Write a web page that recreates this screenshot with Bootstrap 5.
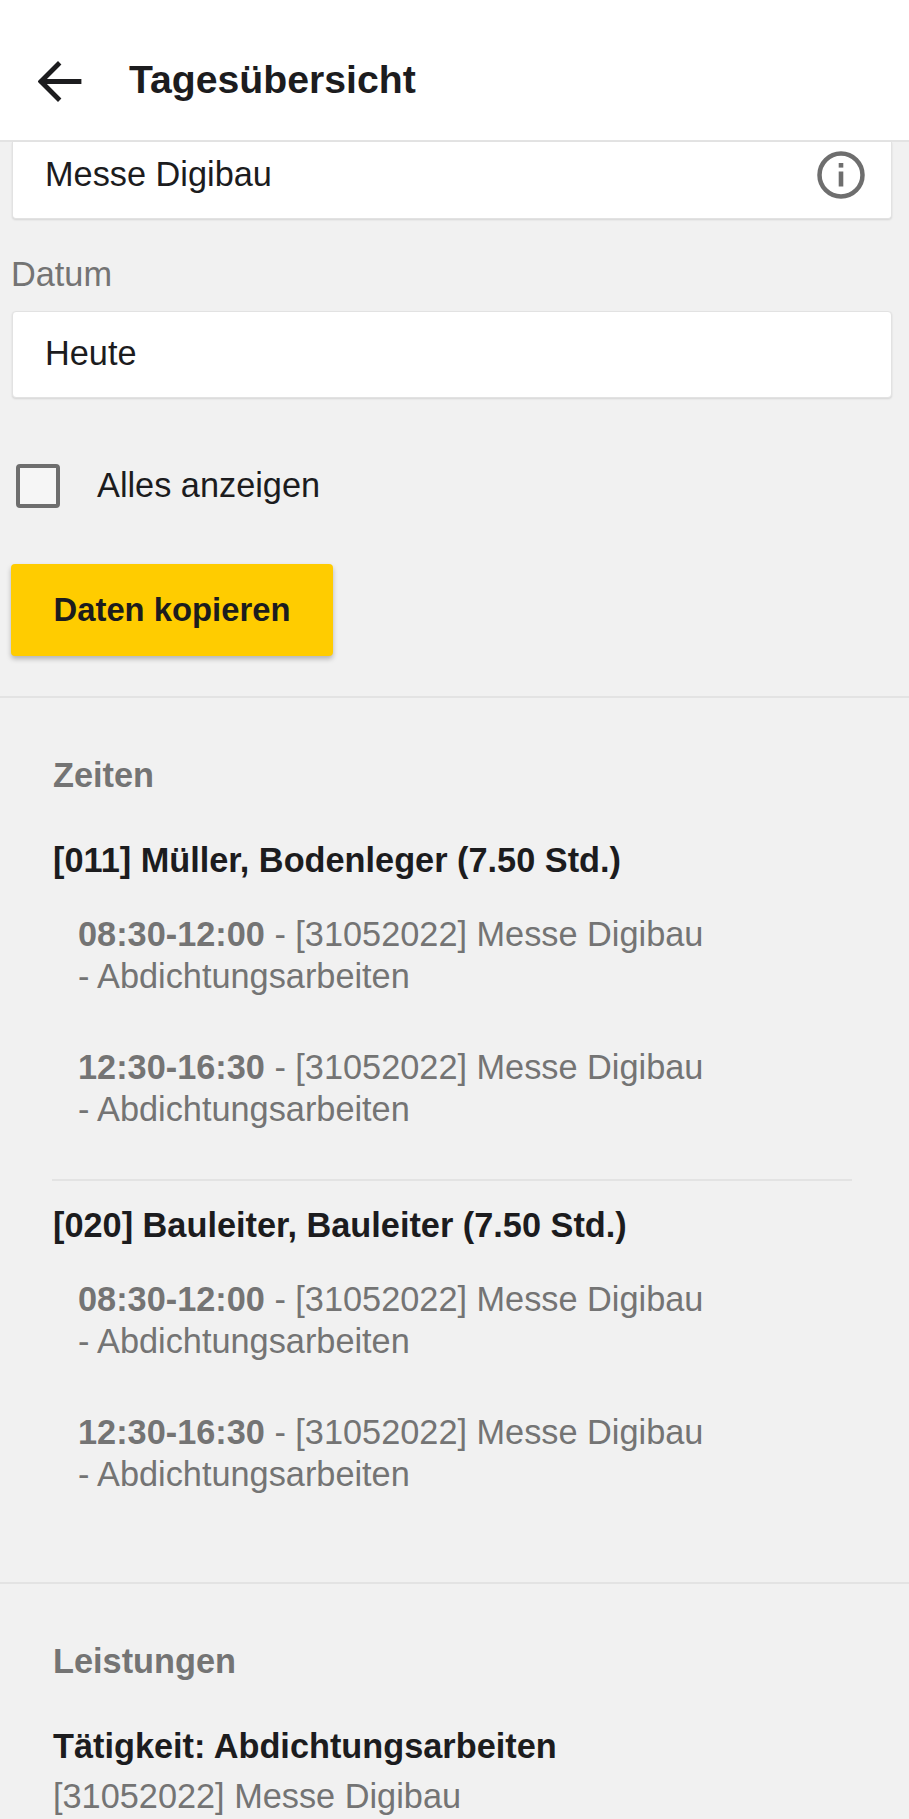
<!DOCTYPE html>
<html lang="de">
<head>
<meta charset="utf-8">
<title>Tagesübersicht</title>
<link rel="stylesheet" href="https://cdn.jsdelivr.net/npm/bootstrap@5.3.0/dist/css/bootstrap.min.css">
<style>
html, body { height: 1819px; overflow: hidden; }
body { background: #f1f1f1; font-family: "Liberation Sans", Arial, sans-serif; color: #1c1c1e; font-size: 34.3px; }
.app-head { height: 142px; background: #fff; border-bottom: 2px solid #e3e3e3; padding: 20px 0 0 38px; gap: 47px; }
.app-title { font-size: 39.2px; font-weight: 700; margin: 0; line-height: 1; }
.app-form { padding: 0 17px 0 12px; }
.field-box { background: #fff; border: 1px solid #e2e2e2; border-radius: 4px; box-shadow: 0 1px 2px rgba(0,0,0,.12); padding: 0 26px 2px 32px; font-size: 34.3px; height: 87px; }
.field-top { height: 77px; border-top: 0; border-radius: 0 0 4px 4px; padding-bottom: 11px; }
.field-label { color: #747474; font-size: 34.3px; line-height: 38px; margin: 36px 0 18px -1px; }
.check-row { margin: 66px 0 0 4px; height: 44px; gap: 37px; }
.check-box { width: 44px; height: 44px; border: 4px solid #6e6e6e; border-radius: 4px; background: #f6f6f6; appearance: none; margin: 0; flex: none; }
.copy-btn { background: #ffcc00; color: #1c1c1e; font-weight: 700; font-size: 32.8px; border: 0; border-radius: 4px; width: 322px; height: 92px; padding: 0; margin: 56px 0 0 -1px; box-shadow: 0 3px 5px rgba(0,0,0,.25); }
.sect-rule { border-top: 2px solid #e3e3e3; }
.sect-one { margin-top: 40px; padding: 0 57px 0 52px; height: 886px; }
.sect-name { color: #747474; font-weight: 700; font-size: 34.3px; line-height: 38px; margin: 58px 0 0 1px; }
.crew-name { font-weight: 700; font-size: 34.3px; line-height: 38px; margin: 47px 0 0 1px; }
.crew-two { margin-top: 25px; }
.time-entry { color: #747474; font-size: 34.3px; line-height: 42px; margin: 0 0 49px 26px; }
.time-first { margin-top: 34px; }
.time-first-b { margin-top: 34px; }
.crew-rule { border-top: 2px solid #e3e3e3; margin: 7px 0 0; opacity: 1; }
.sect-two { padding: 0 52px; }
.sect-sub { color: #747474; line-height: 42px; margin: 10px 0 0 1px; }
</style>
</head>
<body>
<header class="app-head d-flex align-items-center">
  <svg width="44" height="44" viewBox="0 -1.5 44 44" aria-hidden="true"><path d="M41 22H4M20 5 3 22l17 17" fill="none" stroke="#1c1c1e" stroke-width="4.8" stroke-linecap="square" stroke-linejoin="miter"/></svg>
  <h1 class="app-title">Tagesübersicht</h1>
</header>
<main>
  <div class="app-form">
    <div class="field-box field-top d-flex align-items-center justify-content-between">
      <span>Messe Digibau</span>
      <svg width="48" height="48" viewBox="0 0 48 48" aria-hidden="true"><circle cx="24" cy="24" r="21.5" fill="none" stroke="#6e6e6e" stroke-width="4.5"/><rect x="21.7" y="12" width="4.6" height="4.6" fill="#6e6e6e"/><rect x="21.7" y="20.5" width="4.6" height="15" fill="#6e6e6e"/></svg>
    </div>
    <div class="field-label">Datum</div>
    <div class="field-box d-flex align-items-center">Heute</div>
    <label class="check-row d-flex align-items-center">
      <input type="checkbox" class="check-box">
      <span>Alles anzeigen</span>
    </label>
    <button type="button" class="btn copy-btn d-block">Daten kopieren</button>
  </div>
  <div class="sect-rule sect-one">
    <div class="sect-name">Zeiten</div>
    <div class="crew-name">[011] Müller, Bodenleger (7.50 Std.)</div>
    <p class="time-entry time-first"><b>08:30-12:00</b> - [31052022] Messe Digibau<br>- Abdichtungsarbeiten</p>
    <p class="time-entry"><b>12:30-16:30</b> - [31052022] Messe Digibau<br>- Abdichtungsarbeiten</p>
    <hr class="crew-rule">
    <div class="crew-name crew-two">[020] Bauleiter, Bauleiter (7.50 Std.)</div>
    <p class="time-entry time-first-b"><b>08:30-12:00</b> - [31052022] Messe Digibau<br>- Abdichtungsarbeiten</p>
    <p class="time-entry"><b>12:30-16:30</b> - [31052022] Messe Digibau<br>- Abdichtungsarbeiten</p>
  </div>
  <div class="sect-rule sect-two">
    <div class="sect-name">Leistungen</div>
    <div class="crew-name">Tätigkeit: Abdichtungsarbeiten</div>
    <div class="sect-sub">[31052022] Messe Digibau</div>
  </div>
</main>
<script src="https://cdn.jsdelivr.net/npm/bootstrap@5.3.0/dist/js/bootstrap.bundle.min.js"></script>
</body>
</html>
